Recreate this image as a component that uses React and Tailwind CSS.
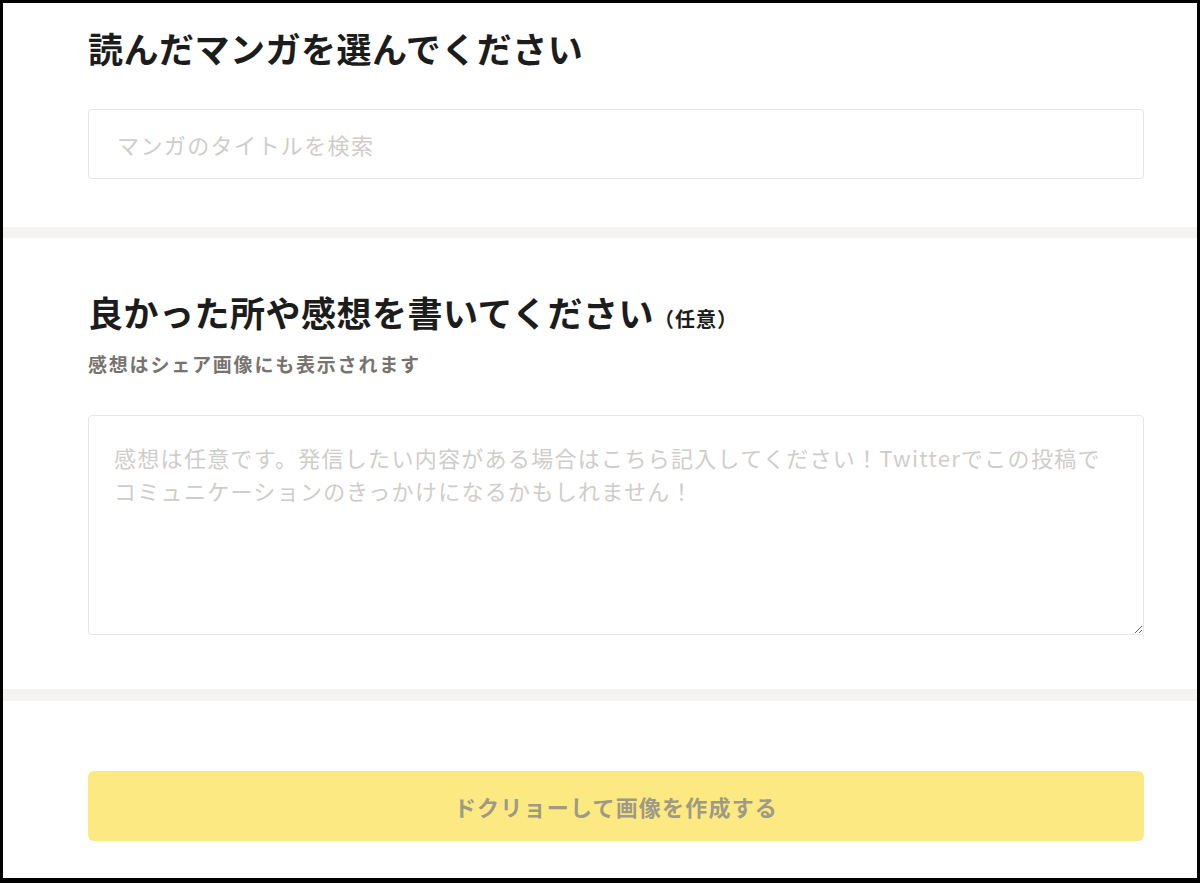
import React from "react";

export default function App() {
  const font = { fontFamily: '"Noto Sans CJK JP", "Noto Sans", sans-serif' };
  return (
    <div
      className="w-[1200px] h-[883px] bg-white border-black border-t-[3px] border-l-[3px] border-r-[3px] border-b-[5px] flex flex-col overflow-hidden"
      style={font}
    >
      <section className="pl-[85px] pt-[21px] pb-[48px]">
        <h2 className="text-[35px] leading-[48px] font-bold tracking-[0.5px] text-[#1c1c1c]">
          読んだマンガを選んでください
        </h2>
        <input
          type="text"
          placeholder="マンガのタイトルを検索"
          className="mt-[37px] w-[1056px] h-[70px] border border-[#e6e5e3] rounded-[4px] pl-[28px] text-[22px] tracking-[1.4px] outline-none placeholder:text-[#cfcdca] text-[#1c1c1c]"
          style={font}
        />
      </section>
      <div className="h-[11px] bg-[#f4f3f1] shrink-0" />
      <section className="pl-[85px] pt-[50px] pb-[54px]">
        <h2 className="text-[35px] leading-[48px] font-bold tracking-[0.5px] text-[#1c1c1c]">
          良かった所や感想を書いてください
          <span className="text-[20px] tracking-[1px]">（任意）</span>
        </h2>
        <p className="mt-[7px] text-[19px] leading-[27px] font-bold tracking-[1.8px] text-[#777470]">
          感想はシェア画像にも表示されます
        </p>
        <textarea
          placeholder="感想は任意です。発信したい内容がある場合はこちら記入してください！Twitterでこの投稿でコミュニケーションのきっかけになるかもしれません！"
          className="mt-[38px] block w-[1056px] h-[220px] border border-[#e6e5e3] rounded-[4px] p-[25px] text-[22px] leading-[33px] tracking-[1.3px] outline-none placeholder:text-[#cfcdca] text-[#1c1c1c]"
          style={font}
        />
      </section>
      <div className="h-[12px] bg-[#f4f3f1] shrink-0" />
      <section className="pl-[85px] pt-[70px]">
        <button
          type="button"
          className="w-[1056px] h-[70px] rounded-[6px] bg-[#fce982] text-[#9f9a85] text-[22px] font-bold tracking-[1.2px] flex items-center justify-center"
          style={font}
        >
          ドクリョーして画像を作成する
        </button>
      </section>
    </div>
  );
}
